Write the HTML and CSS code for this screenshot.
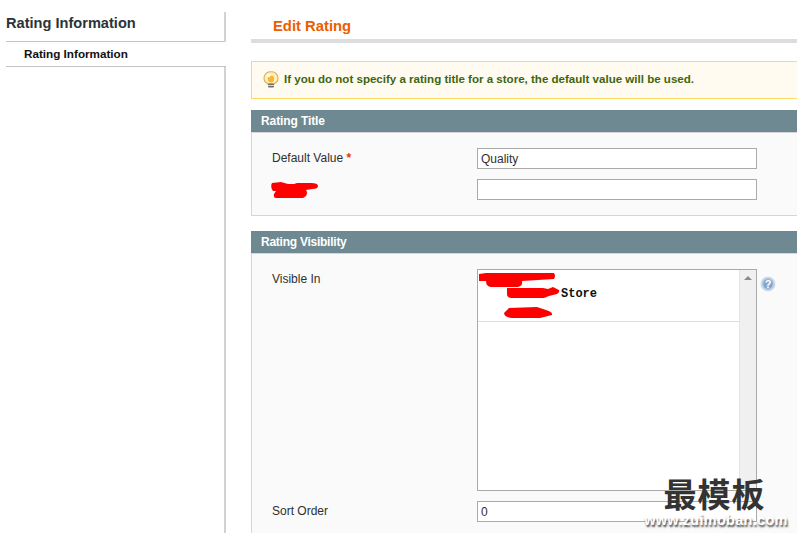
FILE: index.html
```html
<!DOCTYPE html>
<html lang="en">
<head>
<meta charset="utf-8">
<title>Edit Rating</title>
<link rel="stylesheet" href="styles.css">
</head>
<body>
<div class="page">
  <aside class="side">
    <h3 class="side-title">Rating Information</h3>
    <div class="side-item">Rating Information</div>
  </aside>
  <main class="main">
    <h3 class="page-title">Edit Rating</h3>
    <div class="notice">
      <svg class="bulb" width="16" height="17" viewBox="0 0 16 17"><path d="M8 .7a6.8 6.3 0 0 0-3.4 11.8V13h6.8v-.5A6.8 6.3 0 0 0 8 .7z" fill="#fdeec0" stroke="#dcae55" stroke-width="1.1"/><ellipse cx="8" cy="8" rx="3.2" ry="3.4" fill="#f9b92e"/><ellipse cx="5.6" cy="4.4" rx="2.2" ry="1.6" fill="#fffbe9"/><rect x="5" y="12.6" width="6" height="4" rx="1" fill="#6f6f6f"/><rect x="5" y="14" width="6" height="1" fill="#d8d8d8"/></svg>
      <span>If you do not specify a rating title for a store, the default value will be used.</span>
    </div>
    <section class="panel panel-title">
      <h4 class="panel-head">Rating Title</h4>
      <div class="panel-body body-title">
        <div class="row"><label class="lbl lbl-low">Default Value <em class="req">*</em></label><input class="field" type="text" value="Quality"></div>
        <div class="row"><label class="lbl lbl-red"><svg width="50" height="18" viewBox="0 0 50 18"><path d="M1 1 l9 -1 l7 2 h6 l3 -1 h14 q7 0 7 3 t-6 3 l-6 1 q2 2 0 6 l-3 2 H6 q-4 0 -3 -4 l2 -3 H2 q-3 -4 -1 -8z" fill="#f00"/></svg></label><input class="field" type="text"></div>
      </div>
    </section>
    <section class="panel">
      <h4 class="panel-head head-vis">Rating Visibility</h4>
      <div class="panel-body body-vis">
        <div class="row row-list">
          <label class="lbl lbl-low">Visible In</label>
          <div class="listbox">
            <div class="list-main">
              <div class="list-options">
                <div class="opt opt-1"><svg width="78" height="15" viewBox="0 0 78 15"><path d="M1 1 L8 0 H76 q2 3 0 6 L44 8 q1 5 -4 6 H14 q-6 0 -6 -6 H1z" fill="#f00"/></svg></div>
                <div class="opt opt-2"><svg width="54" height="12" viewBox="0 0 54 12"><path d="M1 2 h36 l5 1 l5 -2 l6 3 q1 2 -2 4 l-8 2 l-5 2 H6 q-5 0 -5 -4z" fill="#f00"/></svg><span class="store">Store</span></div>
                <div class="opt opt-3"><svg width="50" height="11" viewBox="0 0 50 11"><path d="M5 1 L33 0 L42 3 q7 2 6 5 L36 11 H8 q-8 -1 -8 -5z" fill="#f00"/></svg></div>
              </div>
            </div>
            <div class="scroll"><span class="arrow"></span></div>
          </div>
          <svg class="help" width="16" height="16" viewBox="0 0 16 16"><circle cx="8" cy="8" r="7" fill="#b9cde5" stroke="#d0deee"/><circle cx="8" cy="8" r="4.8" fill="#86a5cb"/><text x="8" y="11.5" class="help-q" text-anchor="middle">?</text></svg>
        </div>
        <div class="row row-sort"><label class="lbl lbl-low">Sort Order</label><input class="field" type="text" value="0"></div>
      </div>
    </section>
  </main>
</div>
<div class="mark">
  <div class="mark-cn">最模板</div>
  <div class="mark-url">www.zuimoban.com</div>
</div>
</body>
</html>
```
FILE: styles.css
```css
html, body { margin: 0; padding: 0; height: 533px; overflow: hidden; background: #fff; }
body { font: 12px/15px "Liberation Sans", Arial, sans-serif; color: #2f2f2f; position: relative; }
.page { display: flex; align-items: flex-start; padding-top: 12px; height: 521px; overflow: hidden; }
.side { width: 220px; margin-left: 6px; height: 521px; flex: none; position: relative; }
.side::after { content: ""; position: absolute; right: 0; top: 0; bottom: 0; width: 2px; background: #d2d2d2; }
.side-title { margin: 0; padding-top: 2px; box-sizing: border-box; font-size: 14.6px; line-height: 18px; font-weight: bold; color: #2b3338; border-bottom: 1px solid #c4c4c4; height: 30px; }
.side-item { height: 24px; padding-left: 18px; font-size: 11.7px; font-weight: bold; line-height: 24px; color: #111; border-bottom: 1px solid #c4c4c4; position: relative; z-index: 1; background: #fff; }
.main { margin-left: 25px; width: 560px; flex: none; }
.page-title { margin: 0; padding: 5px 0 0 22px; font-size: 14.8px; line-height: 18px; font-weight: bold; color: #eb5e00; border-bottom: 4px solid #ddd; height: 22px; }
.notice { display: flex; align-items: center; gap: 5px; margin-top: 18px; height: 35px; padding: 0 0 1px 11px; background: #fffbf0; border: 1px solid #ffd967; border-right: 0; font-size: 11.55px; font-weight: bold; color: #3d6611; }
.bulb { flex: none; }
.panel-title { margin-top: 11px; }
.panel { margin-bottom: 15px; }
.panel-head { margin: 0; height: 22px; padding-left: 10px; background: #6f8992; color: #fff; font-size: 12px; letter-spacing: -.1px; line-height: 22px; font-weight: bold; }
.head-vis { letter-spacing: -.25px; }
.panel-body { background: #fafafa; border: 1px solid #d6d6d6; border-right: 0; }
.body-title { box-sizing: border-box; height: 84px; padding-top: 15px; }
.body-vis { padding: 15px 0 20px; border-bottom: 0; }
.row { display: flex; align-items: flex-start; height: 21px; margin-bottom: 10px; }
.lbl { width: 205px; padding-left: 20px; flex: none; line-height: 19px; }
.lbl-low { padding-top: 1px; }
.req { color: #eb340a; font-style: normal; font-weight: bold; }
.lbl-red { height: 18px; }
.lbl-red svg { display: block; margin: 3px 0 0 -1px; }
.field { width: 280px; height: 21px; box-sizing: border-box; margin: 0; padding: 2px 3px; border: 1px solid #aaa; background: #fff; font: 12px/15px "Liberation Sans", Arial, sans-serif; color: #2f2f2f; }
.row-list { height: 222px; }
.listbox { width: 280px; height: 222px; box-sizing: border-box; border: 1px solid #aaa; background: #fff; display: flex; flex: none; }
.list-main { flex: 1; }
.list-options { height: 51px; border-bottom: 1px solid #ddd; }
.opt svg { display: block; }
.opt-1 { height: 16px; padding-top: 3px; box-sizing: border-box; }
.opt-2 { height: 12px; display: flex; align-items: center; padding-left: 28px; margin-top: 0; }
.opt-3 { height: 11px; padding-left: 26px; margin-top: 9px; }
.store { font: bold 12px/14px "Liberation Mono", monospace; color: #111; margin-left: 1px; position: relative; top: 2px; }
.scroll { width: 16px; background: #f0f0f0; border-left: 1px solid #e4e4e4; position: relative; flex: none; }
.arrow { position: absolute; left: 4px; top: 6px; border: 4px solid transparent; border-top: 0; border-bottom: 4px solid #8a8a8a; }
.help { margin: 7px 0 0 3px; flex: none; }
.help-q { font: bold 11px "Liberation Sans", sans-serif; fill: #fff; }
.mark { position: absolute; left: 635px; top: 474px; width: 159px; text-align: center; }
.mark-cn { font: bold 33px/38px "Noto Sans CJK SC", serif; color: #333; letter-spacing: 1px; }
.mark-url { font: bold 14.5px/15px "Liberation Sans", sans-serif; color: #fff; text-shadow: 1px 2px 2px #444; letter-spacing: .3px; margin-left: 3px; margin-top: 1px; }
```
